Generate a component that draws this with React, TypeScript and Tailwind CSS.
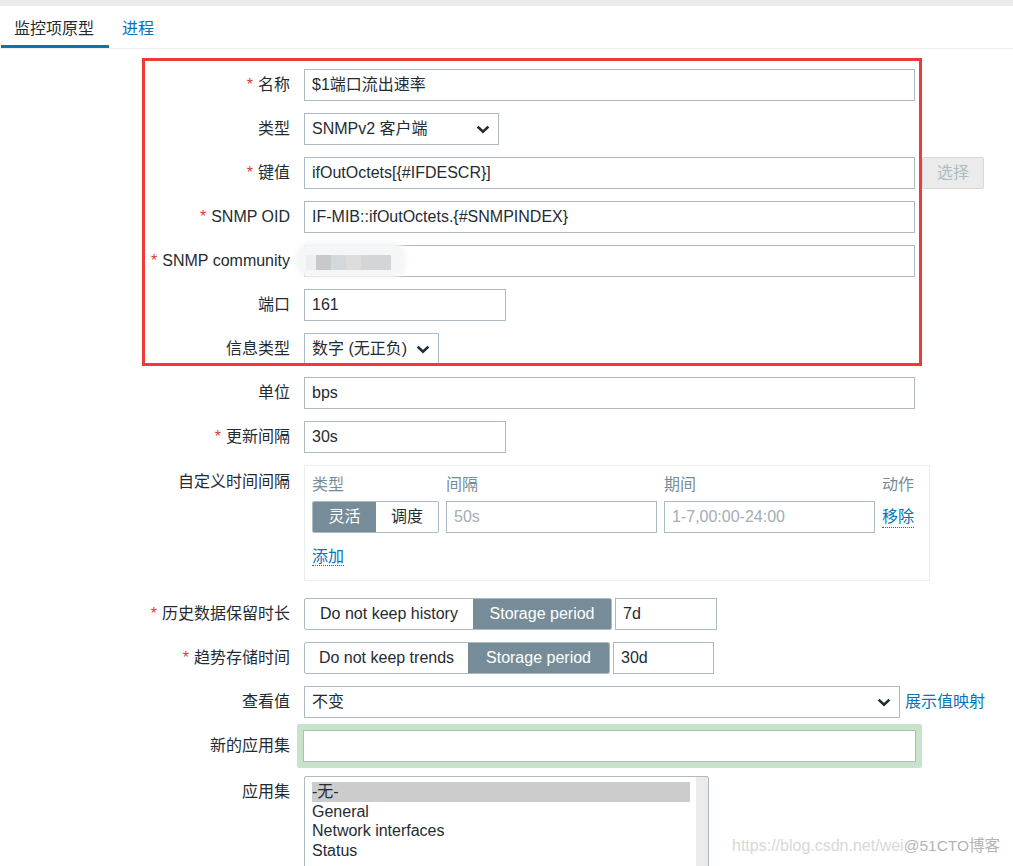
import React from "react"

const inputCls =
  "h-8 border border-[#acbbc2] bg-white px-[7px] flex items-center text-[16px] text-[#1f2c33] leading-none"

const Chevron = () => (
  <svg width="14" height="9" viewBox="0 0 14 9" className="shrink-0">
    <polyline points="1.6,1.6 7,6.8 12.4,1.6" fill="none" stroke="#1f2c33" strokeWidth="2.6" />
  </svg>
)

const Label = ({ text, required, className = "" }: { text: string; required?: boolean; className?: string }) => (
  <div className={`w-[290px] shrink-0 text-right text-[16px] leading-5 ${className}`}>
    {required && <span className="text-[#e33734] mr-[5px]">*</span>}
    {text}
  </div>
)

const Row = ({ children, className = "" }: { children: React.ReactNode; className?: string }) => (
  <div className={`flex items-center ${className}`}>{children}</div>
)

export default function App() {
  return (
    <div className="relative w-[1013px] h-[866px] overflow-hidden bg-white text-[#1f2c33] font-['Liberation_Sans','Noto_Sans_CJK_SC',sans-serif]">
      {/* top strip */}
      <div className="h-[6px] bg-[#e9ebed]" />
      {/* tabs */}
      <div className="flex h-[43px] border-b border-[#ebeef0]">
        <div className="ml-px w-[108px] pl-[13px] pt-[13px] leading-5 border-b-[3px] border-[#0275b8] text-[16px]">
          监控项原型
        </div>
        <div className="ml-[13px] pt-[13px] leading-5 text-[16px] text-[#0275b8]">进程</div>
      </div>

      {/* form */}
      <div className="pt-[20px] flex flex-col">
        <div className="flex flex-col gap-3">
          <Row>
            <Label text="名称" required />
            <div className={`${inputCls} ml-[14px] w-[611px]`}>$1端口流出速率</div>
          </Row>
          <Row>
            <Label text="类型" />
            <div className={`${inputCls} ml-[14px] w-[195px] justify-between pr-[8px]`}>
              <span>SNMPv2 客户端</span>
              <Chevron />
            </div>
          </Row>
          <Row>
            <Label text="键值" required />
            <div className={`${inputCls} ml-[14px] w-[611px]`}>ifOutOctets[{"{#IFDESCR}"}]</div>
            <div className="ml-[7px] h-8 w-[62px] rounded-[2px] border border-[#d3d9dc] bg-[#ebebeb] text-[#acbbc2] text-[16px] flex items-center justify-center">
              选择
            </div>
          </Row>
          <Row>
            <Label text="SNMP OID" required />
            <div className={`${inputCls} ml-[14px] w-[611px]`}>IF-MIB::ifOutOctets.{"{#SNMPINDEX}"}</div>
          </Row>
          <Row>
            <Label text="SNMP community" required />
            <div className={`${inputCls} ml-[14px] w-[611px] relative overflow-visible`}>
              {/* blurred value */}
              <div className="absolute left-[-9px] top-[-4px] w-[110px] h-[36px] rounded-[14px] bg-[#f5f6f7] blur-[2px]" />
              <div className="absolute left-[1px] top-[9px] h-[15px] flex">
                <div className="w-[10px] bg-[#eeeff0]" />
                <div className="w-[15px] bg-[#c9c9cb]" />
                <div className="w-[15px] bg-[#d3d8da]" />
                <div className="w-[15px] bg-[#dcdcdc]" />
                <div className="w-[30px] bg-[#d4d5d6]" />
              </div>
            </div>
          </Row>
          <Row>
            <Label text="端口" />
            <div className={`${inputCls} ml-[14px] w-[202px]`}>161</div>
          </Row>
          <Row>
            <Label text="信息类型" />
            <div className={`${inputCls} ml-[14px] w-[135px] justify-between pr-[8px]`}>
              <span>数字 (无正负)</span>
              <Chevron />
            </div>
          </Row>
          <Row>
            <Label text="单位" />
            <div className={`${inputCls} ml-[14px] w-[611px]`}>bps</div>
          </Row>
          <Row>
            <Label text="更新间隔" required />
            <div className={`${inputCls} ml-[14px] w-[202px]`}>30s</div>
          </Row>
          <div className="flex items-start">
            <Label text="自定义时间间隔" className="pt-[7px]" />
            <div className="ml-[14px] w-[626px] h-[116px] border border-[#ebeef0] pl-[7px] pt-[9px]">
              <div className="grid grid-cols-[127px_211px_211px_auto] gap-x-[7px] gap-y-[6px] text-[16px]">
                <div className="leading-5 text-[#768d99]">类型</div>
                <div className="leading-5 text-[#768d99]">间隔</div>
                <div className="leading-5 text-[#768d99]">期间</div>
                <div className="leading-5 text-[#768d99]">动作</div>
                <div className="flex h-8 rounded-[2px] border border-[#acbbc2] overflow-hidden">
                  <div className="w-[63px] bg-[#768d99] text-white flex items-center justify-center">灵活</div>
                  <div className="flex-1 flex items-center justify-center">调度</div>
                </div>
                <div className={`${inputCls} text-[#a2aeb4]`}>50s</div>
                <div className={`${inputCls} text-[#a2aeb4]`}>1-7,00:00-24:00</div>
                <div className="flex items-center">
                  <span className="text-[#0275b8] leading-5 border-b border-dotted border-[#0275b8]">移除</span>
                </div>
              </div>
              <div className="mt-[14px] leading-5">
                <span className="text-[#0275b8] border-b border-dotted border-[#0275b8]">添加</span>
              </div>
            </div>
          </div>
        </div>

        <Row className="mt-[17px]">
          <Label text="历史数据保留时长" required />
          <div className="ml-[14px] flex h-8 rounded-[2px] border border-[#acbbc2] overflow-hidden text-[16px]">
            <div className="w-[168px] flex items-center justify-center">Do not keep history</div>
            <div className="w-[138px] bg-[#768d99] text-white flex items-center justify-center">Storage period</div>
          </div>
          <div className={`${inputCls} ml-[3px] w-[102px]`}>7d</div>
        </Row>
        <Row className="mt-3">
          <Label text="趋势存储时间" required />
          <div className="ml-[14px] flex h-8 rounded-[2px] border border-[#acbbc2] overflow-hidden text-[16px]">
            <div className="w-[163px] flex items-center justify-center">Do not keep trends</div>
            <div className="w-[141px] bg-[#768d99] text-white flex items-center justify-center">Storage period</div>
          </div>
          <div className={`${inputCls} ml-[3px] w-[101px] border-[#1466a8]`}>30d</div>
        </Row>
        <Row className="mt-3">
          <Label text="查看值" />
          <div className={`${inputCls} ml-[14px] w-[596px] justify-between pr-[8px]`}>
            <span>不变</span>
            <Chevron />
          </div>
          <span className="ml-[5px] text-[16px] text-[#0275b8]">展示值映射</span>
        </Row>
        <Row className="mt-[6px]">
          <Label text="新的应用集" />
          <div className="ml-[7px] w-[625px] rounded-[2px] bg-[#c7e3c9] p-[6px]">
            <div className={`${inputCls} w-full`} />
          </div>
        </Row>
        <div className="flex items-start mt-[8px]">
          <Label text="应用集" className="pt-[6px]" />
          <div className="ml-[14px] w-[405px] h-[110px] border border-[#acbbc2] rounded-[2px] flex">
            <div className="flex-1 pl-[7px] pt-[5px] text-[16px] leading-[19.5px]">
              <div className="bg-[#cccccc] w-[378px]">-无-</div>
              <div>General</div>
              <div>Network interfaces</div>
              <div>Status</div>
            </div>
            <div className="w-[12px] bg-[#ebebeb]" />
          </div>
        </div>
      </div>

      {/* watermark */}
      <div className="absolute left-[732px] top-[836px] flex items-center leading-5">
        <span className="text-[#d8d8d8] text-[16px]">https://blog.csdn.net/wei</span>
        <span className="text-[#b4b4b4] text-[15.5px]">@51CTO博客</span>
      </div>

      {/* red annotation box */}
      <div className="absolute left-[142px] top-[58px] w-[780px] h-[308px] border-[3px] border-[#f03a3a] pointer-events-none" />
    </div>
  )
}
